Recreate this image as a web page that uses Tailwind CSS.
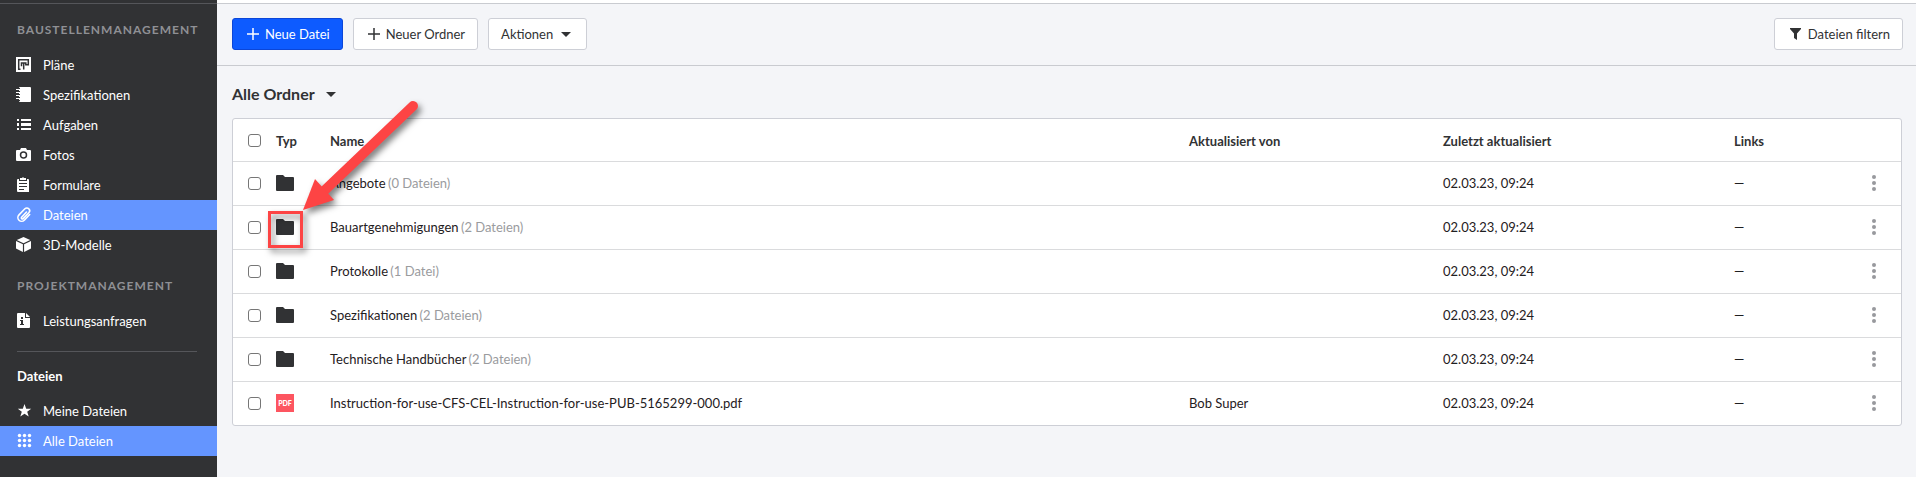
<!DOCTYPE html>
<html lang="de">
<head>
  <meta charset="UTF-8">
  <meta name="viewport" content="width=device-width, initial-scale=1.0">
  <title>Dateien</title>
  <script src="https://cdn.jsdelivr.net/npm/@tailwindcss/browser@4"></script>
</head>
<body class="min-h-screen flex bg-[#f4f5f8] text-[#1f2022] text-[13px] leading-5 font-['Lato',sans-serif]">

  <!-- Sidebar -->
  <aside class="w-[217px] shrink-0 bg-[#313234] text-white">
    <div class="h-1 border-b border-[#55565a]"></div>
    <nav>
      <h2 class="h-[46px] pt-4 pl-[17px] text-xs leading-5 font-bold tracking-[1px] text-[#8f9094]">BAUSTELLENMANAGEMENT</h2>
      <a href="#" class="flex items-center gap-[11px] h-[30px] pl-4">
        <svg class="size-4" viewBox="0 0 16 16"><path fill="#fff" d="M0 0h15v15H0z"/><path fill="none" stroke="#313234" stroke-width="1.500" d="M4.500 12.200H2.700V2.700h9.600v5.100H9.800V5.900H5.500v3.300M7.700 6v6.500"/></svg>
        Pläne
      </a>
      <a href="#" class="flex items-center gap-[11px] h-[30px] pl-4">
        <svg class="size-4" viewBox="0 0 16 16"><rect x="3" y="0" width="12" height="15" rx="1" fill="#fff"/><path stroke="#fff" d="M0 2.500h4M0 5.500h4M0 8.500h4M0 11.500h4"/><path stroke="#313234" d="M2 1.500h2M2 4.500h2M2 7.500h2M2 10.500h2M2 13.500h2"/></svg>
        Spezifikationen
      </a>
      <a href="#" class="flex items-center gap-[11px] h-[30px] pl-4">
        <svg class="size-4" viewBox="0 0 16 16" fill="#fff"><path d="M1 2h2v2H1zM5 2h10v2H5zM1 6h2v3H1zM5 6h10v3H5zM1 11h2v2H1zM5 11h10v2H5z"/></svg>
        Aufgaben
      </a>
      <a href="#" class="flex items-center gap-[11px] h-[30px] pl-4">
        <svg class="size-4" viewBox="0 0 16 16"><path fill="#fff" d="M5 1h5l1 2h3q1 0 1 1v9q0 1-1 1H1q-1 0-1-1V4q0-1 1-1h3z"/><circle cx="7.500" cy="8" r="3" fill="none" stroke="#313234" stroke-width="1.500"/></svg>
        Fotos
      </a>
      <a href="#" class="flex items-center gap-[11px] h-[30px] pl-4">
        <svg class="size-4" viewBox="0 0 16 16"><path fill="#fff" d="M2 2h1v2h8V2h1q1 0 1 1v12H2q-1 0-1-1V3q0-1 1-1z"/><path fill="#fff" d="M1 4h12v3H1zM4 1h2l1-1 1 1h2v2H4z"/><path stroke="#313234" d="M3 6.500h8M3 9.500h8M3 12.500h5"/></svg>
        Formulare
      </a>
      <a href="#" class="flex items-center gap-[11px] h-[30px] pl-4 bg-[#6495ff]">
        <svg class="size-4" viewBox="0 0 16 16" fill="none" stroke="#fff" stroke-width="1.600" stroke-linecap="round"><path d="M10.500 5 5.600 10.200a1 1 0 0 0 1.600 1.400l5.600-5.900a2.700 2.700 0 0 0-3.900-3.900L3 7.900a3.700 3.700 0 0 0 5.300 5.300l5.400-5.700"/></svg>
        Dateien
      </a>
      <a href="#" class="flex items-center gap-[11px] h-[30px] pl-4">
        <svg class="size-4" viewBox="0 0 16 16" fill="#fff"><path d="m7.500 0 6.700 3-6.700 3.200L.8 3zM0 4l6.900 3.300V15L0 11.600zM15 4 8.100 7.300V15L15 11.600z"/></svg>
        3D-Modelle
      </a>

      <h2 class="h-[46px] pt-4 pl-[17px] text-xs leading-5 font-bold tracking-[1px] text-[#8f9094]">PROJEKTMANAGEMENT</h2>
      <a href="#" class="flex items-center gap-[11px] h-[30px] pl-4">
        <svg class="size-4" viewBox="0 0 16 16"><path fill="#fff" d="M2 0h7v5h5v9q0 1-1 1H2q-1 0-1-1V1q0-1 1-1z"/><path fill="#fff" d="m10 0 4 4h-4z"/><path fill="#313234" d="M5 4h2v2H5zM4 7h3v4h1v1H4v-1h1V8H4z"/></svg>
        Leistungsanfragen
      </a>
    </nav>

    <hr class="mt-[15px] ml-[17px] mr-5 border-[#55565a]">

    <nav>
      <h2 class="h-11 pt-[14px] pl-[17px] leading-5 font-bold">Dateien</h2>
      <a href="#" class="flex items-center gap-[11px] h-[30px] pl-4">
        <svg class="size-4" viewBox="0 0 16 16" fill="#fff"><path d="m8.500 1 1.700 4.800h5l-4 3 1.500 4.800-4.200-2.900-4.200 2.900 1.500-4.800-4-3h5z"/></svg>
        Meine Dateien
      </a>
      <a href="#" class="flex items-center gap-[11px] h-[30px] pl-4 bg-[#6495ff]">
        <svg class="size-4" viewBox="0 0 16 16" fill="#fff"><circle cx="3.500" cy="2.500" r="1.700"/><circle cx="8.500" cy="2.500" r="1.700"/><circle cx="13.500" cy="2.500" r="1.700"/><circle cx="3.500" cy="7.500" r="1.700"/><circle cx="8.500" cy="7.500" r="1.700"/><circle cx="13.500" cy="7.500" r="1.700"/><circle cx="3.500" cy="12.500" r="1.700"/><circle cx="8.500" cy="12.500" r="1.700"/><circle cx="13.500" cy="12.500" r="1.700"/></svg>
        Alle Dateien
      </a>
    </nav>
  </aside>

  <main class="grow min-w-0">
    <div class="h-1 bg-white border-b border-[#c9cbd0]"></div>

    <!-- Toolbar -->
    <div class="flex items-center gap-[10px] h-[62px] pl-[15px] pr-[13px] pb-px border-b border-[#c9cbd0] text-[#313234]">
      <button class="flex items-center gap-[6px] h-8 pl-[14px] pr-3 rounded-[3px] border border-[#0b46d8] bg-[#0d5bff] text-white">
        <svg class="size-3" viewBox="0 0 12 12" stroke="currentColor" stroke-width="1.500"><path d="M6 0v12M0 6h12"/></svg>
        Neue Datei
      </button>
      <button class="flex items-center gap-[6px] h-8 pl-[14px] pr-3 rounded-[3px] border border-[#cdcfd6] bg-white">
        <svg class="size-3" viewBox="0 0 12 12" stroke="currentColor" stroke-width="1.500"><path d="M6 0v12M0 6h12"/></svg>
        Neuer Ordner
      </button>
      <button class="flex items-center gap-2 h-8 pl-3 pr-[15px] rounded-[3px] border border-[#cdcfd6] bg-white">
        Aktionen
        <svg class="w-[10px] h-[5px]" viewBox="0 0 10 5" fill="currentColor"><path d="M0 0h10L5 5z"/></svg>
      </button>
      <button class="ml-auto flex items-center gap-[7px] h-8 pl-[15px] pr-3 rounded-[3px] border border-[#cdcfd6] bg-white">
        <svg class="w-[11px] h-3" viewBox="0 0 11 12" fill="currentColor"><path d="M0 0h11v1L7 5.500V12l-3-2V5.500L0 1z"/></svg>
        Dateien filtern
      </button>
    </div>

    <!-- Folder picker -->
    <button class="flex items-center gap-[11px] mt-[17px] ml-[15px] text-base leading-[22px] font-bold text-[#313234]">
      Alle Ordner
      <svg class="w-[10px] h-[5px]" viewBox="0 0 10 5" fill="currentColor"><path d="M0 0h10L5 5z"/></svg>
    </button>

    <div class="relative mt-[13px] ml-[15px] mr-[14px] rounded-[3px] border border-[#cdcfd6] bg-white">
      <table class="w-full table-fixed text-left">
        <thead>
          <tr class="h-[42px] border-b border-[#dadbdd] text-[#313234]">
            <th class="w-[43px] pt-[2px] pl-[15px]"><input type="checkbox" aria-label="Alle auswählen" class="block size-[13px] appearance-none rounded-[3px] border border-[#767676] bg-white checked:bg-[#0d5bff]"></th>
            <th class="w-[54px] pt-[2px] font-bold">Typ</th>
            <th class="pt-[2px] font-bold">Name</th>
            <th class="w-[254px] pt-[2px] font-bold">Aktualisiert von</th>
            <th class="w-[291px] pt-[2px] font-bold">Zuletzt aktualisiert</th>
            <th class="w-[138px] pt-[2px] font-bold">Links</th>
            <th class="w-[29px]"></th>
          </tr>
        </thead>
        <tbody id="rows"></tbody>
      </table>

      <!-- Marker over the folder icon of the second row -->
      <svg class="absolute -top-[21px] left-[29px] w-[170px] h-[160px] pointer-events-none drop-shadow-[3px_4px_3px_rgba(0,0,0,0.5)]" viewBox="262 98 170 160" fill="none">
        <path d="M413 106 325 190" stroke="#fd4444" stroke-width="10" stroke-linecap="round"/>
        <path d="m303 210 12-31 19 21z" fill="#fd4444"/>
        <rect x="269.500" y="212.500" width="32" height="34" stroke="#fd4444" stroke-width="3"/>
      </svg>
    </div>
  </main>

  <script>
    const files = [
      { name: 'Angebote', count: '(0 Dateien)' },
      { name: 'Bauartgenehmigungen', count: '(2 Dateien)' },
      { name: 'Protokolle', count: '(1 Datei)' },
      { name: 'Spezifikationen', count: '(2 Dateien)' },
      { name: 'Technische Handbücher', count: '(2 Dateien)' },
      { name: 'Instruction-for-use-CFS-CEL-Instruction-for-use-PUB-5165299-000.pdf', pdf: true, user: 'Bob Super' },
    ];

    const folderIcon = '<svg class="w-[18px] h-4" viewBox="0 0 18 16" fill="#313234"><path d="M1 0h6l2 2h8q1 0 1 1v12q0 1-1 1H1q-1 0-1-1V1q0-1 1-1z"/></svg>';
    const pdfIcon = '<div class="size-[18px] flex items-center justify-center bg-[#fd5560] text-white text-[7px] font-black">PDF</div>';

    // Build one table row per file
    document.getElementById('rows').innerHTML = files.map(file => `
      <tr class="h-11 border-b border-[#dadbdd] last:border-b-0">
        <td class="pl-[15px]"><input type="checkbox" aria-label="${file.name}" class="block size-[13px] appearance-none rounded-[3px] border border-[#767676] bg-white checked:bg-[#0d5bff]"></td>
        <td>${file.pdf ? pdfIcon : folderIcon}</td>
        <td>${file.name} <span class="-ml-px text-[#9a9b9e]">${file.count || ''}</span></td>
        <td>${file.user || ''}</td>
        <td>02.03.23, 09:24</td>
        <td>—</td>
        <td>
          <button aria-label="Mehr" class="block">
            <svg class="w-1 h-4" viewBox="0 0 4 16" fill="#98999d"><circle cx="2" cy="2" r="2"/><circle cx="2" cy="8" r="2"/><circle cx="2" cy="14" r="2"/></svg>
          </button>
        </td>
      </tr>`).join('');
  </script>
</body>
</html>
